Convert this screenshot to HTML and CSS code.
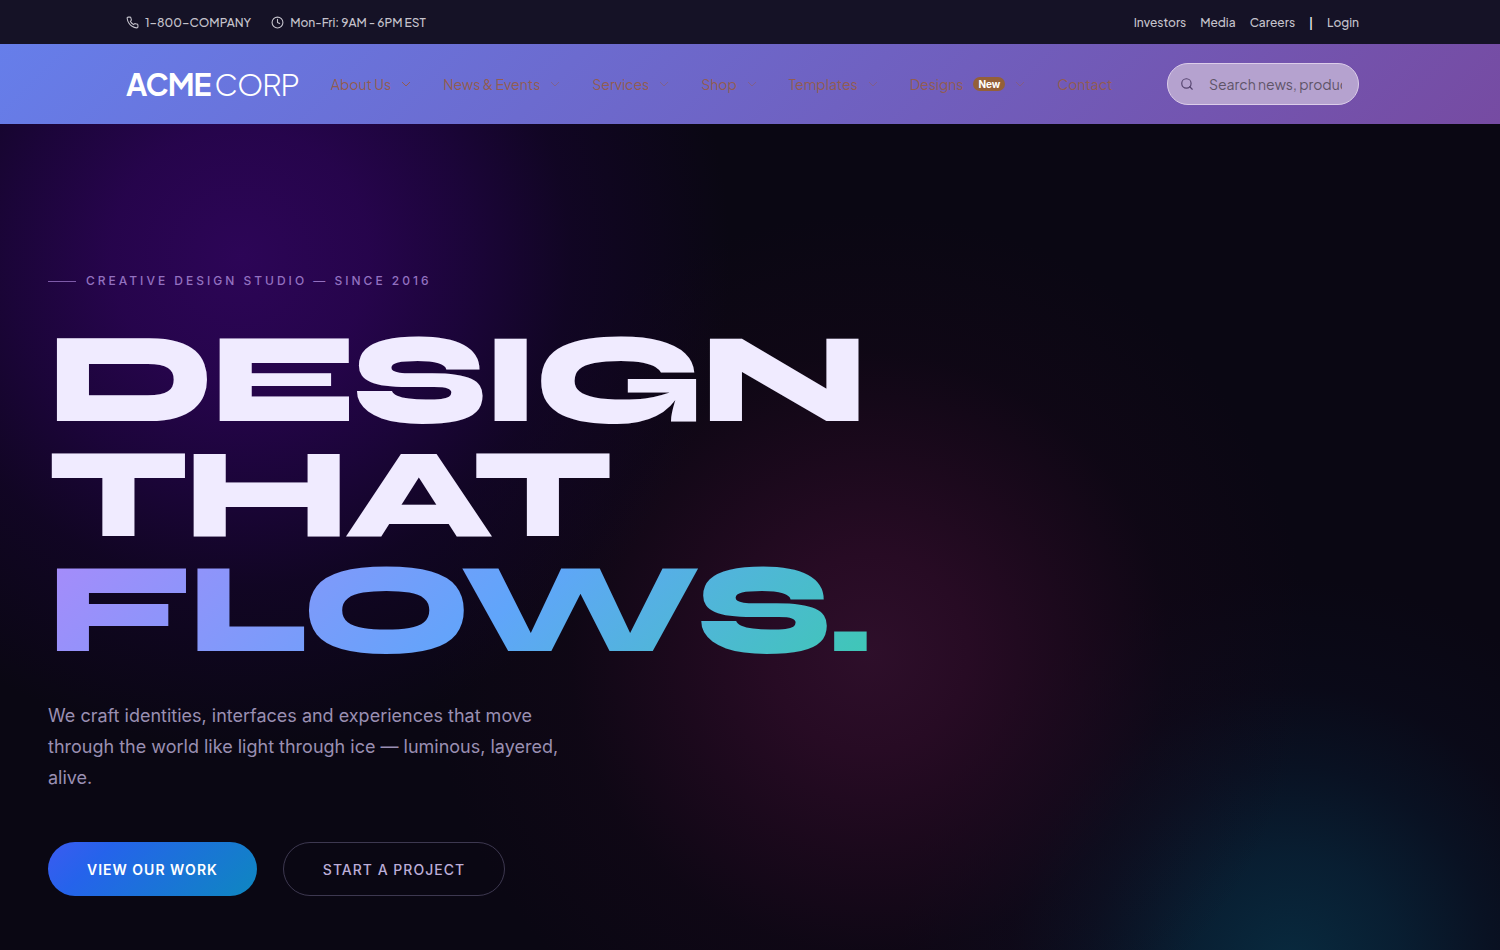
FILE: index.html
```
<!DOCTYPE html>
<html lang="en">
<head>
<meta charset="UTF-8">
<meta name="viewport" content="width=device-width, initial-scale=1.0">
<title>Acme Corp - Creative Design Studio</title>
<link rel="stylesheet" href="styles.css">
</head>
<body>

<div class="topbar">
  <div class="container topbar-inner">
    <div class="topbar-info">
      <span class="info-item">
        <svg class="icon icon-small" viewBox="0 0 24 24"><path d="M22 16.92v3a2 2 0 0 1-2.18 2 19.79 19.79 0 0 1-8.63-3.07 19.5 19.5 0 0 1-6-6 19.79 19.79 0 0 1-3.07-8.67A2 2 0 0 1 4.11 2h3a2 2 0 0 1 2 1.72c.13.96.36 1.9.7 2.81a2 2 0 0 1-.45 2.11L8.09 9.91a16 16 0 0 0 6 6l1.27-1.27a2 2 0 0 1 2.11-.45c.91.34 1.85.57 2.81.7A2 2 0 0 1 22 16.92z"/></svg>
        1-800-COMPANY
      </span>
      <span class="info-item">
        <svg class="icon icon-small" viewBox="0 0 24 24"><circle cx="12" cy="12" r="10"/><path d="M12 6v6l4 2"/></svg>
        Mon-Fri: 9AM - 6PM EST
      </span>
    </div>
    <div class="topbar-links">
      <a href="#">Investors</a>
      <a href="#">Media</a>
      <a href="#">Careers</a>
      <span class="divider">|</span>
      <a href="#">Login</a>
    </div>
  </div>
</div>

<header class="header">
  <div class="container header-inner">
    <a class="logo" href="#"><b>ACME</b><span>CORP</span></a>
    <nav class="nav">
      <a href="#">About Us <svg class="chevron chevron-first" viewBox="0 0 10 10"><path d="M1 3l4 4 4-4"/></svg></a>
      <a href="#">News &amp; Events <svg class="chevron" viewBox="0 0 10 10"><path d="M1 3l4 4 4-4"/></svg></a>
      <a href="#">Services <svg class="chevron" viewBox="0 0 10 10"><path d="M1 3l4 4 4-4"/></svg></a>
      <a href="#">Shop <svg class="chevron" viewBox="0 0 10 10"><path d="M1 3l4 4 4-4"/></svg></a>
      <a href="#">Templates <svg class="chevron" viewBox="0 0 10 10"><path d="M1 3l4 4 4-4"/></svg></a>
      <a href="#">Designs <span class="badge">New</span> <svg class="chevron" viewBox="0 0 10 10"><path d="M1 3l4 4 4-4"/></svg></a>
      <a href="#">Contact</a>
    </nav>
    <form class="search">
      <svg class="icon" viewBox="0 0 24 24"><circle cx="11" cy="11" r="8"/><path d="M21 21l-4.3-4.3"/></svg>
      <input type="text" placeholder="Search news, products..." aria-label="Search">
    </form>
  </div>
</header>

<main class="hero">
  <p class="eyebrow">Creative Design Studio — Since 2016</p>
  <h1 class="title">DESIGN<br>THAT<br><span class="flow">FLOWS.</span></h1>
  <p class="lead">We craft identities, interfaces and experiences that move through the world like light through ice — luminous, layered, alive.</p>
  <div class="actions">
    <button class="btn btn-primary" type="button">View our work</button>
    <button class="btn btn-ghost" type="button">Start a project</button>
  </div>
</main>

</body>
</html>
```
FILE: styles.css
```
* {
  box-sizing: border-box;
}

body {
  margin: 0;
  font-family: Inter, 'Liberation Sans', sans-serif;
  background-color: #0a0713;
  color: #f0ebff;
}

a {
  color: inherit;
  text-decoration: none;
}

.container {
  max-width: 1248px;
  margin: 0 auto;
  padding-right: 15px;
  font-family: 'Plus Jakarta Sans', Inter, sans-serif;
}

.icon {
  width: 14px;
  height: 14px;
  fill: none;
  stroke: currentColor;
  stroke-width: 2;
  stroke-linecap: round;
  stroke-linejoin: round;
}

.icon-small {
  width: 13px;
  height: 13px;
}

/* Top bar */
.topbar {
  background-color: #151226;
  color: #c5c3cc;
  font-size: 12px;
  font-weight: 500;
}

.topbar-inner {
  display: flex;
  justify-content: space-between;
  align-items: center;
  height: 44px;
}

.topbar-info {
  display: flex;
  gap: 20px;
}

.info-item {
  display: flex;
  align-items: center;
  gap: 6px;
}

.topbar-links {
  display: flex;
  align-items: center;
  gap: 14px;
}

.divider {
  color: #fff;
}

/* Header */
.header {
  background: linear-gradient(135deg, #667eea 0%, #764ba2 100%);
}

.header-inner {
  display: flex;
  align-items: center;
  height: 80px;
}

.logo {
  display: flex;
  gap: 4px;
  margin-right: 32px;
  font-size: 30px;
  letter-spacing: -1px;
  color: #fff;
}

.logo span {
  font-weight: 300;
}

.nav {
  display: flex;
  gap: 32px;
  font-size: 14px;
  color: #935c50;
  white-space: nowrap;
}

.nav a {
  display: flex;
  align-items: center;
  gap: 10px;
}

.chevron {
  width: 10px;
  height: 10px;
  fill: none;
  stroke: currentColor;
  opacity: 0.5;
}

.chevron-first {
  opacity: 1;
}

.badge {
  padding: 0 5px;
  border-radius: 7px;
  background-color: #946038;
  color: #fff;
  font-family: Inter, sans-serif;
  font-size: 10px;
  font-weight: 700;
  line-height: 14px;
}

.search {
  display: flex;
  align-items: center;
  gap: 15px;
  width: 192px;
  height: 42px;
  margin-left: auto;
  padding: 0 16px 0 12px;
  border: 1px solid #dccde9;
  border-radius: 21px;
  background-color: #b5a2cf;
  color: #54436e;
}

.search .icon {
  flex-shrink: 0;
}

.search input {
  width: 100%;
  min-width: 0;
  padding: 0;
  border: 0;
  outline: 0;
  background: none;
  font: inherit;
  font-size: 14px;
}

.search input::placeholder {
  color: #5f5468;
}

/* Hero */
.hero {
  min-height: calc(100vh - 124px);
  padding: 150px 48px 54px;
  background:
    radial-gradient(circle at 16% 16%, rgba(48, 5, 94, 0.9) 0, rgba(42, 4, 84, 0.87) 130px, rgba(34, 4, 72, 0.72) 230px, rgba(24, 4, 52, 0.5) 330px, transparent 490px),
    radial-gradient(circle at 58% 64%, rgba(52, 16, 46, 0.85) 0, rgba(46, 12, 40, 0.8) 100px, rgba(38, 10, 34, 0.6) 200px, rgba(26, 8, 26, 0.3) 300px, transparent 440px),
    radial-gradient(circle at 86% 102%, rgba(8, 48, 70, 0.85) 0, rgba(8, 38, 60, 0.75) 110px, rgba(8, 28, 50, 0.5) 200px, rgba(10, 16, 36, 0.3) 280px, transparent 390px),
    #0a0713;
}

.eyebrow {
  display: flex;
  align-items: center;
  gap: 10px;
  margin: 0 0 34px;
  font-size: 12px;
  font-weight: 500;
  line-height: 14px;
  letter-spacing: 3px;
  text-transform: uppercase;
  color: #9371c0;
}

.eyebrow::before {
  content: "";
  width: 28px;
  height: 1px;
  background-color: #7d5aa8;
}

.title {
  margin: 0 0 33px;
  font-family: Syne, 'DejaVu Sans', sans-serif;
  font-size: 128px;
  font-weight: 800;
  line-height: 115px;
  letter-spacing: -4px;
}

.flow {
  display: inline-block;
  background: linear-gradient(135deg, #a78bfa 0%, #60a5fa 55%, #3ec8b4 100%);
  background-clip: text;
  -webkit-background-clip: text;
  color: transparent;
}

.lead {
  max-width: 520px;
  margin: 0 0 49px;
  font-size: 18px;
  line-height: 31px;
  color: #9a8fb2;
}

.actions {
  display: flex;
  flex-wrap: wrap;
  gap: 26px;
}

.btn {
  height: 54px;
  padding: 0 39px;
  border: 0;
  border-radius: 27px;
  font-family: inherit;
  font-size: 14px;
  letter-spacing: 1px;
  text-transform: uppercase;
  cursor: pointer;
}

.btn-primary {
  background: linear-gradient(135deg, #3b5bf0 0%, #2563eb 25%, #0e87c0 100%);
  color: #fff;
  font-weight: 600;
}

.btn-ghost {
  border: 1px solid #3d3850;
  background: none;
  color: #bcaed8;
  font-weight: 500;
}
```
